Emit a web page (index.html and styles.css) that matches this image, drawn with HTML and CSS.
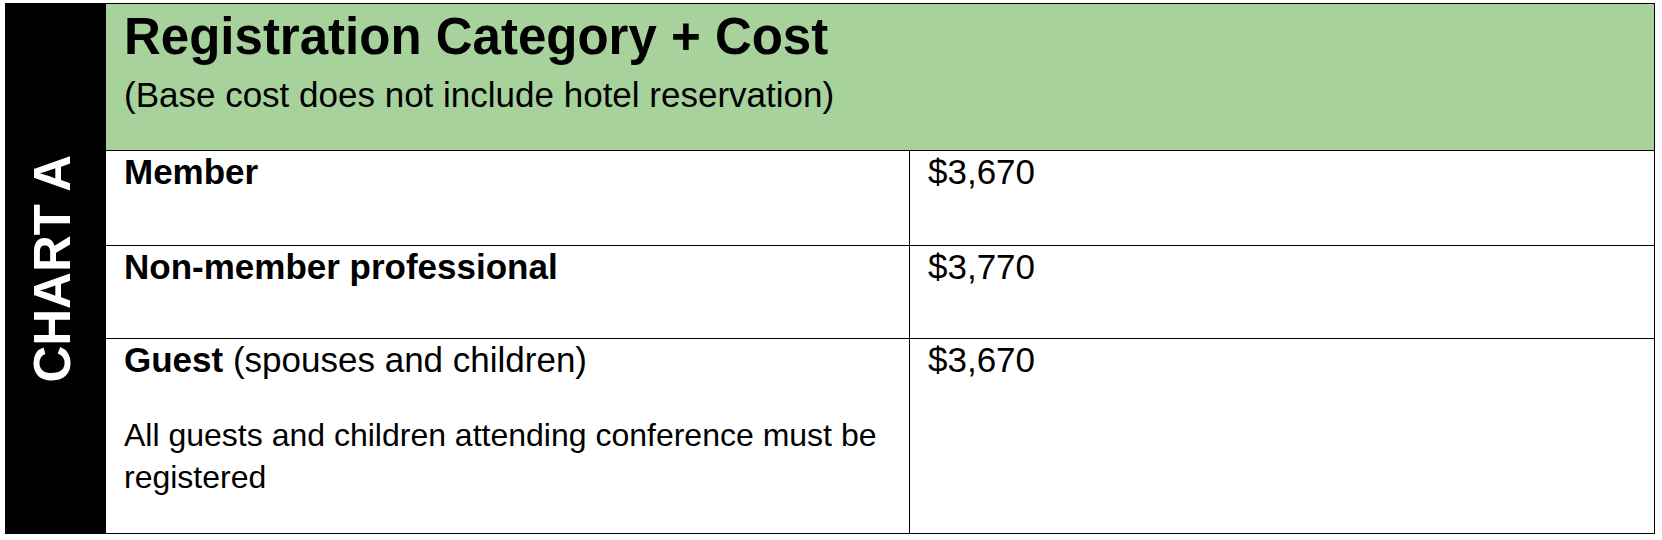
FILE: index.html
```html
<!DOCTYPE html>
<html lang="en">
<head>
<meta charset="utf-8">
<title>Chart A</title>
<link rel="stylesheet" href="styles.css">
</head>
<body>
<div class="chart">
  <div class="side"><span class="side-label">CHART A</span></div>
  <div class="head">
    <div class="head-title">Registration Category + Cost</div>
    <div class="head-sub">(Base cost does not include hotel reservation)</div>
  </div>
  <div class="cell cat row1"><b>Member</b></div>
  <div class="cell price row1">$3,670</div>
  <div class="cell cat row2"><b>Non-member professional</b></div>
  <div class="cell price row2">$3,770</div>
  <div class="cell cat row3 last">
    <div><b>Guest</b> (spouses and children)</div>
    <div class="note">All guests and children attending conference must be registered</div>
  </div>
  <div class="cell price row3 last">$3,670</div>
</div>
</body>
</html>
```
FILE: styles.css
```css
html, body {
  margin: 0;
  padding: 0;
  background: #ffffff;
}
body {
  padding: 3px 0 0 5px;
  font-family: "Liberation Sans", Arial, sans-serif;
  color: #000;
}
.chart {
  display: grid;
  grid-template-columns: 100px 804px 744px;
  grid-template-rows: 147px 95px 93px 194px;
  width: 1650px;
  border: 1px solid #000;
  box-sizing: border-box;
}
.side {
  grid-row: 1 / 5;
  grid-column: 1;
  background: #000;
  display: flex;
  align-items: center;
  justify-content: center;
}
.side-label {
  writing-mode: vertical-rl;
  transform: rotate(180deg);
  color: #fff;
  font-weight: bold;
  font-size: 51px;
  line-height: 1;
  margin-right: 8px;
}
.head {
  grid-column: 2 / 4;
  background: #a8d29c;
  border-bottom: 1px solid #000;
  padding: 4px 18px 0 18px;
}
.head-title {
  font-size: 51px;
  font-weight: bold;
  line-height: 58px;
}
.head-sub {
  font-size: 35px;
  line-height: 40px;
  margin-top: 9px;
}
.cell {
  font-size: 35px;
  line-height: 40px;
  padding: 1px 18px 0 18px;
  border-bottom: 1px solid #000;
}
.cell.last {
  border-bottom: none;
}
.cat {
  border-right: 1px solid #000;
}
.note {
  font-size: 32px;
  line-height: 42px;
  margin-top: 34px;
}
```
